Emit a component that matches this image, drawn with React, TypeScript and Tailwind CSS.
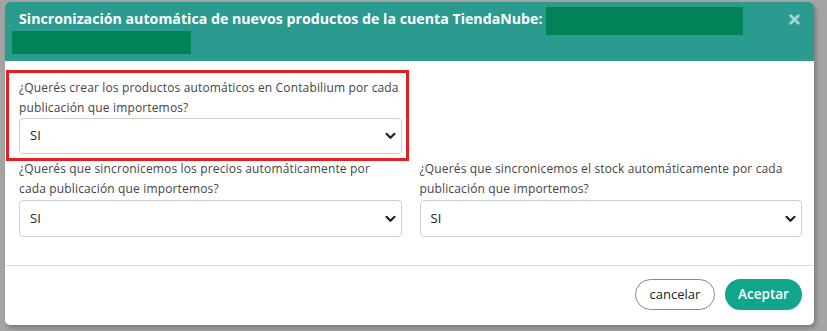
import type { ReactNode } from 'react';
import { X } from 'lucide-react';

const font = { fontFamily: '"Open Sans", "Liberation Sans", sans-serif' };

function Chevron() {
  return (
    <svg width="11" height="8" viewBox="0 0 11 8" className="shrink-0">
      <path d="M1.5 1.8 L5.5 5.8 L9.5 1.8" fill="none" stroke="#222" strokeWidth="2.2" strokeLinecap="round" strokeLinejoin="round" />
    </svg>
  );
}

function FakeSelect({ className = '' }: { className?: string }) {
  return (
    <div
      className={`flex items-center justify-between rounded-[4px] border border-[#cfcfcf] bg-white pl-[10px] pr-[5px] text-[13px] text-[#222] ${className}`}
    >
      <span>SI</span>
      <Chevron />
    </div>
  );
}

function Field({ label, selectClass }: { label: ReactNode; selectClass: string }) {
  return (
    <div className="flex flex-col">
      <p className="whitespace-nowrap text-[12px] leading-[20px] tracking-[0.15px] text-[#444]">{label}</p>
      <FakeSelect className={selectClass} />
    </div>
  );
}

export default function App() {
  return (
    <div className="relative h-[331px] w-[827px] overflow-hidden bg-[#a4a4a4] pl-[5px] pt-[2px]" style={font}>
      <div className="relative flex h-[323px] w-[809px] flex-col overflow-hidden rounded-[5px] bg-white shadow-[2px_3px_4px_rgba(0,0,0,0.25)]">
        <div className="relative h-[59px] shrink-0 bg-[#2b9a8f] pl-[14px] pr-[10px] pt-[6px]">
          <h2 className="text-[14.2px] font-bold leading-[22px] text-white">
            Sincronización automática de nuevos productos de la cuenta TiendaNube:
          </h2>
          <div className="absolute left-[541px] top-[5px] h-[28px] w-[197px] bg-[#018257]" />
          <div className="absolute left-[7px] top-[29px] h-[23px] w-[179px] bg-[#018257]" />
          <X className="absolute right-[12px] top-[10px] h-[15px] w-[15px] text-[#a3d9d1]" strokeWidth={4.5} />
        </div>

        <div className="grid grid-cols-2 gap-x-[18px] border-b border-[#dedede] px-[14px] pb-[28px] pt-[17px] pr-[12px]">
          <Field
            label={<>¿Querés crear los productos automáticos en Contabilium por cada<br />publicación que importemos?</>}
            selectClass="h-[36px]"
          />
          <div />
          <div className="mt-[5px]">
            <Field
              label={<>¿Querés que sincronicemos los precios automáticamente por<br />cada publicación que importemos?</>}
              selectClass="mt-[1px] h-[37px]"
            />
          </div>
          <div className="mt-[5px]">
            <Field
              label={<>¿Querés que sincronicemos el stock automáticamente por cada<br />publicación que importemos?</>}
              selectClass="mt-[1px] h-[37px]"
            />
          </div>
        </div>

        <div className="flex flex-1 items-center justify-end gap-[10px] pb-[2px] pr-[12px]">
          <button className="h-[31px] w-[80px] rounded-full border border-[#8a8a8a] bg-white text-[13px] text-[#222]">
            cancelar
          </button>
          <button className="h-[31px] w-[77px] rounded-full bg-[#10a68b] text-[13.5px] font-semibold text-white">
            Aceptar
          </button>
        </div>

        <div className="pointer-events-none absolute left-[1px] top-[68px] h-[91px] w-[403px] border-[3px] border-[#e31e24]" />
      </div>
    </div>
  );
}
